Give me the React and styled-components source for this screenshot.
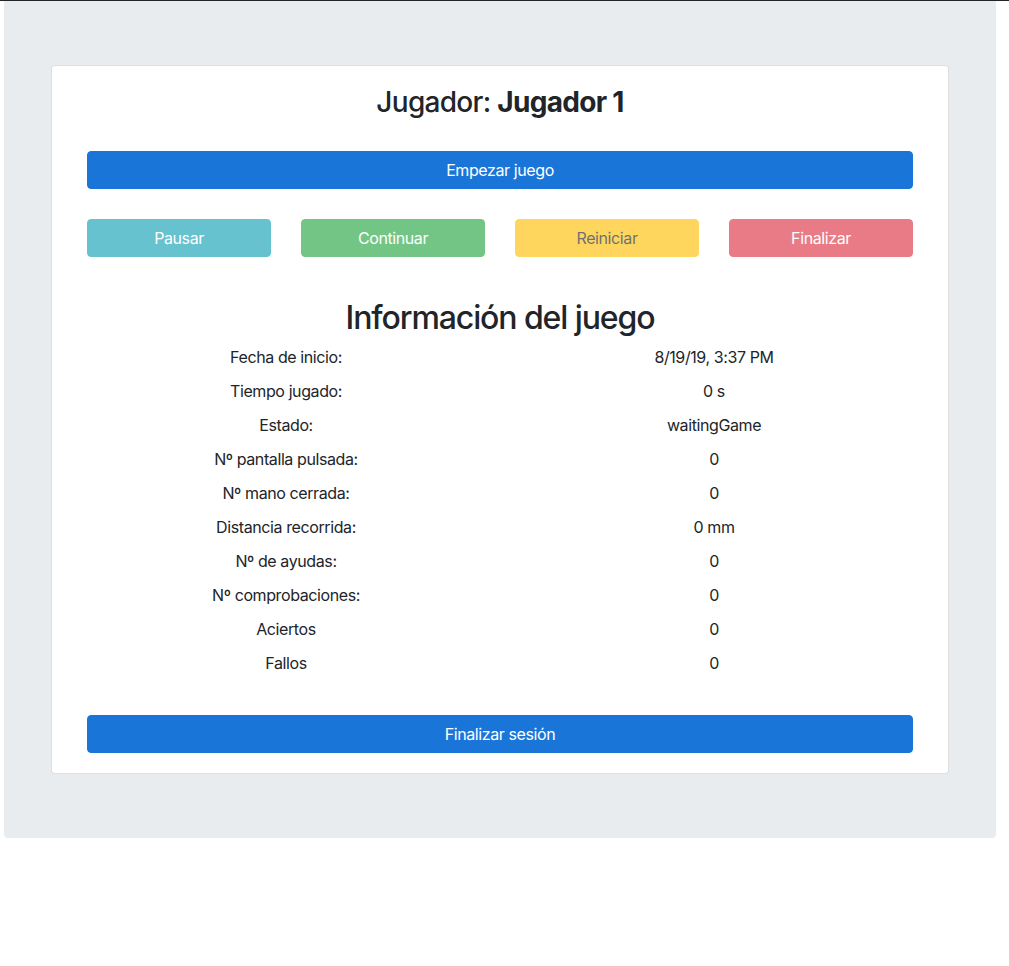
import React from "react";
import styled, { createGlobalStyle } from "styled-components";

const Global = createGlobalStyle`
  html, body { margin: 0; padding: 0; background: #fff; }
  body {
    font-family: Inter, "Noto Sans", "Liberation Sans", sans-serif;
    color: #212529;
    font-size: 16px;
    line-height: 1.5;
  }
  * { box-sizing: border-box; }
`;

const TopLine = styled.div`
  height: 1px;
  background: #212529;
`;

const Jumbotron = styled.div`
  margin: 0 13px 0 4px;
  background: #e9ecef;
  border-radius: 0 0 4px 4px;
  padding: 64px 47px 64px 47px;
`;

const Card = styled.div`
  background: #fff;
  border: 1px solid rgba(0, 0, 0, 0.125);
  border-radius: 4px;
  padding: 20px 35px 20px 35px;
`;

const Title = styled.h3`
  margin: 0 0 31px;
  text-align: center;
  font-size: 28px;
  font-weight: 500;
  line-height: 1.2;
  letter-spacing: -0.7px;
  b { font-weight: 700; }
`;

const colors = {
  primary: { bg: "#1976d8", fg: "#fff" },
  info: { bg: "#17a2b8", fg: "#fff" },
  success: { bg: "#28a745", fg: "#fff" },
  warning: { bg: "#ffc107", fg: "#212529" },
  danger: { bg: "#dc3545", fg: "#fff" },
};

const Button = styled.button`
  display: block;
  width: 100%;
  height: 38px;
  padding: 6px 12px;
  border: 1px solid ${(p) => colors[p.$variant].bg};
  border-radius: 4px;
  background: ${(p) => colors[p.$variant].bg};
  color: ${(p) => colors[p.$variant].fg};
  font-family: inherit;
  font-size: 16px;
  line-height: 24px;
  letter-spacing: -0.4px;
  text-align: center;
  opacity: ${(p) => (p.disabled ? 0.65 : 1)};
  cursor: ${(p) => (p.disabled ? "default" : "pointer")};
`;

const ButtonRow = styled.div`
  display: grid;
  grid-template-columns: repeat(4, 1fr);
  column-gap: 30px;
  margin-top: 30px;
`;

const InfoTitle = styled.h2`
  margin: 42px 0 3px;
  text-align: center;
  font-size: 32px;
  font-weight: 500;
  line-height: 1.2;
  letter-spacing: -1.1px;
`;

const InfoGrid = styled.div`
  display: grid;
  grid-template-columns: 1fr 1fr;
  margin: 0 -15px;
`;

const Cell = styled.div`
  padding: 5px 15px;
  text-align: center;
  line-height: 24px;
  font-size: 16px;
  letter-spacing: -0.4px;
`;

const Footer = styled.div`
  margin-top: 35px;
`;

const rows = [
  ["Fecha de inicio:", "8/19/19, 3:37 PM"],
  ["Tiempo jugado:", "0 s"],
  ["Estado:", "waitingGame"],
  ["Nº pantalla pulsada:", "0"],
  ["Nº mano cerrada:", "0"],
  ["Distancia recorrida:", "0 mm"],
  ["Nº de ayudas:", "0"],
  ["Nº comprobaciones:", "0"],
  ["Aciertos", "0"],
  ["Fallos", "0"],
];

export default function App() {
  return (
    <>
      <Global />
      <TopLine />
      <Jumbotron>
        <Card>
          <Title>
            Jugador: <b>Jugador 1</b>
          </Title>
          <Button $variant="primary">Empezar juego</Button>
          <ButtonRow>
            <Button $variant="info" disabled>Pausar</Button>
            <Button $variant="success" disabled>Continuar</Button>
            <Button $variant="warning" disabled>Reiniciar</Button>
            <Button $variant="danger" disabled>Finalizar</Button>
          </ButtonRow>
          <InfoTitle>Información del juego</InfoTitle>
          <InfoGrid>
            {rows.map(([k, v]) => (
              <React.Fragment key={k}>
                <Cell>{k}</Cell>
                <Cell>{v}</Cell>
              </React.Fragment>
            ))}
          </InfoGrid>
          <Footer>
            <Button $variant="primary">Finalizar sesión</Button>
          </Footer>
        </Card>
      </Jumbotron>
    </>
  );
}
